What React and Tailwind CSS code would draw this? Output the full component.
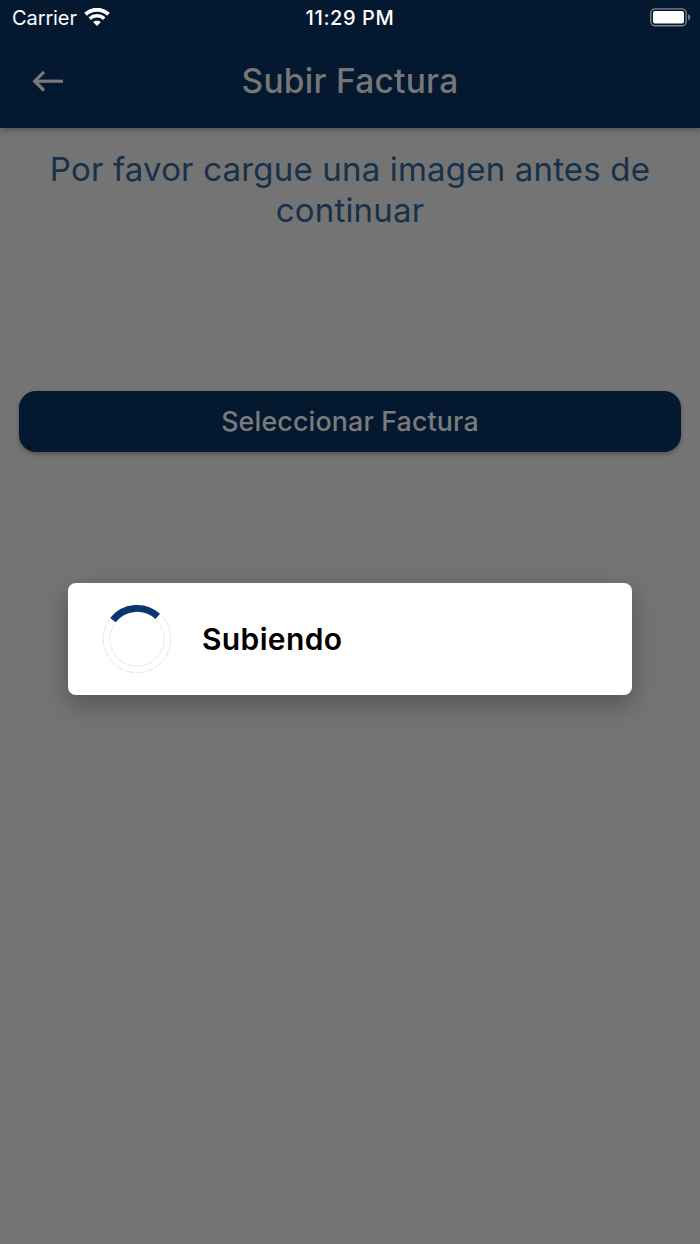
import React from 'react';

const WifiIcon = () => (
  <svg width="26" height="20" viewBox="0 0 26 20" fill="none">
    <path d="M1.5 6.2C8 .2 18 .2 24.5 6.2" stroke="white" strokeWidth="3.9" />
    <path d="M5.7 10.6C10 6.9 16 6.9 20.3 10.6" stroke="white" strokeWidth="3.5" />
    <path d="M13 17.9L9.1 14.1C11.3 12.3 14.7 12.3 16.9 14.1Z" fill="white" />
  </svg>
);

const BatteryIcon = () => (
  <svg width="42" height="20" viewBox="0 0 42 20" fill="none">
    <rect x="0.8" y="0.9" width="35.4" height="16.9" rx="4.2" stroke="#7b8591" strokeWidth="1.4" />
    <rect x="3" y="3.1" width="31" height="12.5" rx="2" fill="white" />
    <path d="M38.2 6.3C41 7.3 41 11.3 38.2 12.3Z" fill="#7b8591" />
  </svg>
);

const BackIcon = () => (
  <svg width="32" height="22" viewBox="0 0 32 22" fill="none" stroke="#7b7977" strokeWidth="3.2">
    <path d="M31 11.2H3" />
    <path d="M12 1.9L2.7 11.2L12 20.5" />
  </svg>
);

const Spinner = () => (
  <svg width="70" height="70" viewBox="0 0 70 70" fill="none">
    <circle cx="35" cy="35" r="33.8" stroke="#b6c3d4" strokeWidth="0.4" strokeDasharray="10 1" />
    <circle cx="35" cy="35" r="27.1" stroke="#b6c3d4" strokeWidth="0.4" strokeDasharray="8 1" />
    <path d="M10.9 16.1A30.6 30.6 0 0 1 55.7 12.4" stroke="#0a366f" strokeWidth="6.9" />
  </svg>
);

const App = () => {
  return (
    <div className="relative flex flex-col h-[1244px] w-[700px] overflow-hidden bg-[#747474] font-['Inter',sans-serif]">
      {/* Header */}
      <header className="h-32 shrink-0 bg-[#041830] shadow-[0_2px_6px_rgba(0,0,0,0.3)]">
        <div className="grid grid-cols-[1fr_auto_1fr] h-9 pl-3 pr-2 items-center text-white">
          <div className="flex items-center gap-[7px]">
            <span className="text-[20px] leading-6 tracking-[-0.1px]">Carrier</span>
            <WifiIcon />
          </div>
          <span className="-ml-4 mr-[-12px] text-center text-[20px] leading-6 tracking-[0.6px] font-medium">
            11:29 PM
          </span>
          <div className="flex justify-end">
            <BatteryIcon />
          </div>
        </div>
        <div className="grid grid-cols-[64px_1fr_64px] h-[90px] items-center">
          <button className="pl-8">
            <BackIcon />
          </button>
          <h1 className="text-center text-[33.5px] leading-10 tracking-[0.25px] font-medium text-[#767676]">
            Subir Factura
          </h1>
        </div>
      </header>

      {/* Content */}
      <main className="flex flex-col px-[19px] pt-[21px]">
        <p className="h-[242px] px-5 text-center text-[33px] leading-[41px] tracking-[0.18px] text-[#17314b]">
          Por favor cargue una imagen antes de continuar
        </p>
        <button className="h-[60.5px] rounded-[17px] bg-[#041830] text-[26.8px] leading-8 tracking-[0.15px] font-medium text-[#7b7b7b] shadow-[0_2px_4px_rgba(0,0,0,0.3)]">
          Seleccionar Factura
        </button>
      </main>

      {/* Upload dialog */}
      <div
        role="dialog"
        className="absolute left-[68px] top-[583px] flex items-center w-[564px] h-28 pl-[34px] gap-[30px] rounded-[8px] bg-white shadow-[0_10px_26px_rgba(0,0,0,0.28)]"
      >
        <Spinner />
        <span className="text-[30px] tracking-[0.35px] font-semibold text-black">Subiendo</span>
      </div>
    </div>
  );
};

export default App;
